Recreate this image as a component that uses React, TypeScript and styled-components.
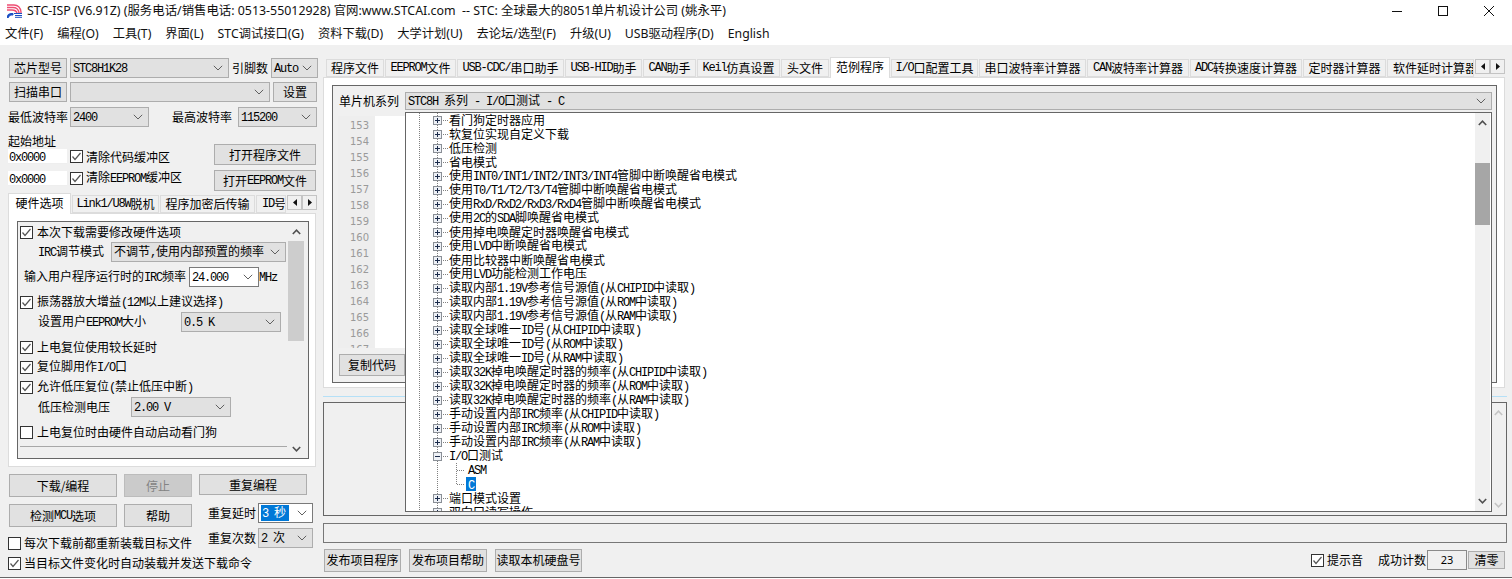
import React from "react";
import styled, { createGlobalStyle } from "styled-components";

const Global = createGlobalStyle`
  html, body { margin: 0; padding: 0; background: #fff; }
  * { box-sizing: border-box; }
`;

const CJK = `"Noto Sans CJK SC", "Noto Sans", sans-serif`;

const Page = styled.div`
  width: 1512px; height: 579px; overflow: hidden; display: flex; flex-direction: column;
  background: #fff; color: #000; font: 12px/14px ${CJK};
`;
const TitleBar = styled.header`
  height: 22px; display: flex; align-items: center; padding-left: 7px; background: #fff;
`;
const TitleText = styled.span`
  margin-left: 5px; flex: 1; white-space: pre; font: 12.4px/16px "Noto Sans", "Noto Sans CJK SC", sans-serif; color: #111;
`;
const WinButton = styled.span`
  width: 46px; height: 22px; display: flex; align-items: center; justify-content: center;
`;
const MenuBar = styled.nav`
  height: 23px; display: flex; align-items: center; gap: 14px; padding-left: 5px; background: #fff;
`;
const MenuItem = styled.span`
  font: 12.25px/16px "Noto Sans", "Noto Sans CJK SC", sans-serif; white-space: nowrap; color: #111;
`;
const Main = styled.main`
  height: 533px; display: flex; background: #f0f0f0; border-bottom: 1px solid #666;
`;
const LeftCol = styled.section`
  width: 323px; flex: none; padding: 13px 0 0 8px;
`;
const RightCol = styled.section`
  width: 1184px; flex: none; padding-top: 12px;
`;
const LatinRun = styled.span`
  font-family: "Liberation Mono", monospace; font-size: 12px; letter-spacing: -1.2px;
`;
const T = ({ children }: { children: string }) => (
  <>
    {children.split(/([\x20-\x7e]+)/).map((s, i) => (i % 2 ? <LatinRun key={i}>{s}</LatinRun> : s))}
  </>
);

const Row = styled.div<{ $top?: number; $pl?: number; $gap?: number; $start?: boolean }>`
  display: flex; align-items: ${p => (p.$start ? "flex-start" : "center")}; margin-top: ${p => p.$top ?? 0}px;
  padding-left: ${p => p.$pl ?? 0}px; gap: ${p => p.$gap ?? 3}px;
`;
const Btn = styled.div<{ $w: number; $h?: number; $off?: boolean }>`
  width: ${p => p.$w}px; height: ${p => p.$h ?? 20}px; flex: none;
  display: flex; align-items: center; justify-content: center; white-space: nowrap;
  background: ${p => (p.$off ? "#cbcbcb" : "#e1e1e1")};
  border: 1px solid ${p => (p.$off ? "#bcbcbc" : "#adadad")};
  color: ${p => (p.$off ? "#838383" : "#000")};
`;
const Label = styled.span<{ $w?: number; $ml?: number }>`
  ${p => (p.$w ? `width: ${p.$w}px;` : "")} flex: none; white-space: nowrap; margin-left: ${p => p.$ml ?? 0}px;
`;
const SelectBox = styled.div<{ $w: number; $h?: number; $white?: boolean }>`
  width: ${p => p.$w}px; height: ${p => p.$h ?? 20}px; flex: none; display: flex; align-items: center;
  justify-content: space-between; padding: 0 5px 0 2px; white-space: nowrap;
  background: ${p => (p.$white ? "#fff" : "#e1e1e1")};
  border: 1px solid ${p => (p.$white ? "#7a7a7a" : "#adadad")};
`;
const Chevron = () => (
  <svg width="10" height="6" viewBox="0 0 10 6" style={{ flex: "none" }}>
    <path d="M.8.8 5 5 9.2.8" fill="none" stroke="#606060" strokeWidth="1" />
  </svg>
);
const Select = ({ w, h, white, v }: { w: number; h?: number; white?: boolean; v: string }) => (
  <SelectBox $w={w} $h={h} $white={white}>
    <span><T>{v}</T></span>
    <Chevron />
  </SelectBox>
);
const Highlight = styled.span`
  background: #0078d7; color: #fff; padding: 0 3px 0 1px; margin-left: 0;
`;
const BoxSvg = styled.svg`
  flex: none; display: block;
`;
const Check = ({ on }: { on?: boolean }) => (
  <BoxSvg width="13" height="13" viewBox="0 0 13 13">
    <rect x=".5" y=".5" width="12" height="12" fill="#fff" stroke="#333" />
    {on && <path d="M2.5 6.5 5 9.5l5.5-6.5" fill="none" stroke="#555" strokeWidth="1.2" />}
  </BoxSvg>
);
const AddressBlock = styled.div`
  display: flex; margin-top: 7px;
`;
const AddressLeft = styled.div`
  width: 206px; flex: none;
`;
const AddressButtons = styled.div`
  display: flex; flex-direction: column; gap: 5px; padding-top: 10px;
`;
const AddressInput = styled.div`
  width: 59px; height: 15px; flex: none; background: #fff; padding-left: 1px; line-height: 13px; border-bottom: 1px solid #eee;
`;
const TabStrip = styled.div<{ $top?: number; $pl?: number }>`
  height: 20px; display: flex; align-items: flex-end; gap: 1px; margin-top: ${p => p.$top ?? 0}px; padding-left: ${p => p.$pl ?? 0}px;
`;
const Tab = styled.div<{ $w: number; $on?: boolean }>`
  width: ${p => p.$w}px; flex: none; overflow: hidden; white-space: nowrap; display: flex; align-items: center; justify-content: center;
  height: ${p => (p.$on ? 21 : 18)}px;
  padding-bottom: ${p => (p.$on ? 3 : 0)}px;
  background: ${p => (p.$on ? "#fff" : "#f0f0f0")};
  border: 1px solid #dcdcdc; border-bottom: ${p => (p.$on ? "none" : "1px solid #dcdcdc")};
  position: relative; z-index: ${p => (p.$on ? 2 : 0)}; margin-bottom: ${p => (p.$on ? -1 : 0)}px;
`;
const TabClip = styled(Tab)`
  justify-content: flex-start; padding-left: 5px;
`;
const TabArrows = styled.div`
  display: flex; align-self: flex-start; margin-top: 2px; flex: none;
`;
const TabArrow = styled.div`
  width: 15px; height: 15px; background: #f0f0f0; border: 1px solid #c4c4c4; display: flex; align-items: center; justify-content: center;
`;
const Arrows = () => (
  <TabArrows>
    <TabArrow><svg width="4" height="7"><path d="M4 0v7L0 3.5z" fill="#111" /></svg></TabArrow>
    <TabArrow><svg width="4" height="7"><path d="M0 0v7l4-3.5z" fill="#111" /></svg></TabArrow>
  </TabArrows>
);
const OptionsPanel = styled.div`
  width: 308px; height: 254px; background: #fff; border: 1px solid #dcdcdc; padding: 7px 0 0 8px;
`;
const OptionsInner = styled.div`
  width: 292px; height: 238px; display: flex; border: 1px solid #666; background: #f0f0f0;
`;
const OptionsBody = styled.div`
  width: 270px; flex: none; padding-left: 2px;
`;
const OptRow = styled.div<{ $h?: number; $top?: number; $pl?: number }>`
  height: ${p => p.$h ?? 20}px; margin-top: ${p => p.$top ?? 0}px; padding-left: ${p => p.$pl ?? 0}px;
  display: flex; align-items: center; white-space: nowrap;
`;
const OptCheckText = styled.span`
  margin-left: 4px;
`;
const OptRule = styled.div`
  height: 1px; width: 267px; margin-top: 4px; background: #a8a8a8;
`;
const Scroll = styled.div<{ $w?: number; $mr?: number }>`
  width: ${p => p.$w ?? 16}px; flex: none; display: flex; flex-direction: column; align-items: stretch; background: #f0f0f0;
  margin-right: ${p => p.$mr ?? 0}px;
`;
const ScrollEnd = styled.div<{ $h: number }>`
  height: ${p => p.$h}px; flex: none; display: flex; align-items: center; justify-content: center;
`;
const Thumb = styled.div<{ $h: number; $c: string }>`
  height: ${p => p.$h}px; flex: none; background: ${p => p.$c};
`;
const ScrollFill = styled.div`
  flex: 1;
`;
const ScrollGap = styled.div<{ $h: number }>`
  height: ${p => p.$h}px; flex: none;
`;
const Caret = ({ down, c = "#505050" }: { down?: boolean; c?: string }) => (
  <svg width="9" height="6" viewBox="0 0 9 6" style={{ display: "block", flex: "none" }}>
    <polyline points={down ? "0.8,1 4.5,4.8 8.2,1" : "0.8,5 4.5,1.2 8.2,5"} fill="none" stroke={c} strokeWidth="1.6" />
  </svg>
);
const BottomSplit = styled.div`
  display: flex; margin-top: 6px;
`;
const BottomLeft = styled.div`
  width: 200px; flex: none;
`;
const BottomRight = styled.div`
  display: flex; flex-direction: column; gap: 5px;
`;
const PanelMain = styled.div`
  width: 1182px; height: 311px; background: #fff; border: 1px solid #dcdcdc; padding: 7px 0 0 8px;
`;
const GroupBox = styled.div`
  position: relative; width: 1165px; height: 298px; background: #f0f0f0; border: 1px solid #666; padding: 6px 0 0 6px;
`;
const SeriesLabel = styled.span`
  width: 66px; flex: none;
`;
const CodeArea = styled.div`
  display: flex; width: 1150px; height: 232px; margin-top: 6px; margin-left: -1px; background: #fff; overflow: hidden;
`;
const Gutter = styled.div`
  width: 37px; flex: none; background: #eee; padding: 2px 6px 0 0; text-align: right;
  font: 10px/16px "DejaVu Sans", sans-serif; color: #9a9a9a;
`;
const CopyRow = styled.div`
  margin-top: 6px;
`;
const TreeDrop = styled.div`
  position: absolute; left: 72px; top: 26px; width: 1087px; height: 400px; z-index: 10;
  display: flex; background: #fff; border: 1px solid #666;
`;
const TreeList = styled.div`
  flex: 1; overflow: hidden; min-width: 0;
`;
const TreeRow = styled.div`
  height: 14px; display: flex; align-items: center; white-space: nowrap; line-height: 14px;
`;
const TreeSvg = styled.svg`
  flex: none; display: block;
`;
const TreeSelected = styled.span`
  background: #0078d7; color: #fff; width: 10px; height: 14px; text-align: center; margin-left: -2px; line-height: 14px; overflow: hidden;
`;
const Splitter = styled.div`
  height: 1px; margin-top: 8px; background: #b5e0f7;
`;
const LogPanel = styled.div`
  height: 114px; margin-top: 5px; display: flex; justify-content: flex-end; border: 1px solid #666; background: #f0f0f0;
`;
const StatusBox = styled.div`
  height: 20px; margin-top: 7px; border: 1px solid #777; background: #f0f0f0;
`;
const BottomBar = styled.div`
  display: flex; align-items: center; height: 24px; margin-top: 5px; padding-left: 1px; padding-right: 2px;
`;
const Spacer = styled.div`
  flex: 1;
`;
const CountBox = styled.div`
  width: 40px; height: 20px; flex: none; display: flex; align-items: center; justify-content: center;
  background: #f0f0f0; border: 1px solid #8a8a8a; margin: 0 1px; font-family: "Noto Sans", sans-serif; font-size: 11px;
`;

const Dots = ({ x1, y1, x2, y2 }: { x1: number; y1: number; x2: number; y2: number }) => (
  <line x1={x1} y1={y1} x2={x2} y2={y2} stroke="#808080" strokeWidth="1" strokeDasharray="1 1" />
);
const TreeGlyph = ({ kind }: { kind: "plus" | "minus" | "leaf" | "lastleaf" }) => {
  const leaf = kind === "leaf" || kind === "lastleaf";
  return (
    <TreeSvg width={leaf ? 62 : 43} height="14" viewBox={`0 0 ${leaf ? 62 : 43} 14`}>
      <Dots x1={13.5} y1={0} x2={13.5} y2={14} />
      <Dots x1={31.5} y1={0} x2={31.5} y2={14} />
      {leaf ? (
        <>
          <Dots x1={50.5} y1={0} x2={50.5} y2={kind === "leaf" ? 14 : 7} />
          <Dots x1={51} y1={7.5} x2={59} y2={7.5} />
        </>
      ) : (
        <>
          <Dots x1={37} y1={7.5} x2={42} y2={7.5} />
          <rect x="27.5" y="3.5" width="8" height="8" fill="#eef1f6" stroke="#8a8f96" />
          <line x1="29" y1="7.5" x2="34" y2="7.5" stroke="#1a2a4a" />
          {kind === "plus" && <line x1="31.5" y1="5" x2="31.5" y2="10" stroke="#1a2a4a" />}
        </>
      )}
    </TreeSvg>
  );
};

const rightTabs: [string, number, boolean?][] = [
  ["程序文件", 58], ["EEPROM文件", 71], ["USB-CDC/串口助手", 107], ["USB-HID助手", 77], ["CAN助手", 53],
  ["Keil仿真设置", 83], ["头文件", 48], ["范例程序", 60, true], ["I/O口配置工具", 87], ["串口波特率计算器", 107],
  ["CAN波特率计算器", 102], ["ADC转换速度计算器", 112], ["定时器计算器", 83],
];
const treeItems = [
  "看门狗定时器应用", "软复位实现自定义下载", "低压检测", "省电模式",
  "使用INT0/INT1/INT2/INT3/INT4管脚中断唤醒省电模式", "使用T0/T1/T2/T3/T4管脚中断唤醒省电模式",
  "使用RxD/RxD2/RxD3/RxD4管脚中断唤醒省电模式", "使用2C的SDA脚唤醒省电模式", "使用掉电唤醒定时器唤醒省电模式",
  "使用LVD中断唤醒省电模式", "使用比较器中断唤醒省电模式", "使用LVD功能检测工作电压",
  "读取内部1.19V参考信号源值(从CHIPID中读取)", "读取内部1.19V参考信号源值(从ROM中读取)", "读取内部1.19V参考信号源值(从RAM中读取)",
  "读取全球唯一ID号(从CHIPID中读取)", "读取全球唯一ID号(从ROM中读取)", "读取全球唯一ID号(从RAM中读取)",
  "读取32K掉电唤醒定时器的频率(从CHIPID中读取)", "读取32K掉电唤醒定时器的频率(从ROM中读取)", "读取32K掉电唤醒定时器的频率(从RAM中读取)",
  "手动设置内部IRC频率(从CHIPID中读取)", "手动设置内部IRC频率(从ROM中读取)", "手动设置内部IRC频率(从RAM中读取)",
];
const menus = ["文件(F)", "编程(O)", "工具(T)", "界面(L)", "STC调试接口(G)", "资料下载(D)", "大学计划(U)", "去论坛/选型(F)", "升级(U)", "USB驱动程序(D)", "English"];
const lineNos = Array.from({ length: 15 }, (_, i) => 153 + i);

const Opt = ({ on, text, top }: { on: boolean; text: string; top?: number }) => (
  <OptRow $top={top}>
    <Check on={on} />
    <OptCheckText><T>{text}</T></OptCheckText>
  </OptRow>
);

export default function App() {
  return (
    <Page>
      <Global />
      <TitleBar>
        <svg width="15" height="14" viewBox="0 0 15 14" style={{ flex: "none" }}>
          <path d="M0 1h7q6 0 7 7v1M0 3.500h6q5 0 6 5v1M0 6h5q4 0 5 3v1" fill="none" stroke="#ee4d73" strokeWidth="1.4" />
          <path d="M0 13.500q.5-4 4-4h2v1.500H4q-2 0-2.500 2.500zM7 9.500h8M8 11.500h7M8 13.300h7" fill="#1a4fc4" stroke="#1a4fc4" strokeWidth="1" />
        </svg>
        <TitleText>STC-ISP (V6.91Z) (服务电话/销售电话: 0513-55012928) 官网:www.STCAI.com  -- STC: 全球最大的8051单片机设计公司 (姚永平)</TitleText>
        <WinButton><svg width="10" height="10"><line x1="0" y1="5.5" x2="10" y2="5.5" stroke="#111" /></svg></WinButton>
        <WinButton><svg width="10" height="10"><rect x=".5" y=".5" width="9" height="9" fill="none" stroke="#111" /></svg></WinButton>
        <WinButton><svg width="10" height="10"><path d="M0 0l10 10M10 0 0 10" stroke="#111" fill="none" /></svg></WinButton>
      </TitleBar>
      <MenuBar>
        {menus.map(m => <MenuItem key={m}>{m}</MenuItem>)}
      </MenuBar>
      <Main>
        <LeftCol>
          <Row $pl={1}>
            <Btn $w={58}>芯片型号</Btn>
            <Select w={159} v="STC8H1K28" />
            <Label $w={36}>引脚数</Label>
            <Select w={47} v="Auto" />
          </Row>
          <Row $pl={1} $top={4}>
            <Btn $w={58}>扫描串口</Btn>
            <Select w={200} v="" />
            <Btn $w={44}>设置</Btn>
          </Row>
          <Row $top={5}>
            <Label $w={59}>最低波特率</Label>
            <Select w={79} v="2400" />
            <Label $w={63} $ml={20}>最高波特率</Label>
            <Select w={79} v="115200" />
          </Row>
          <AddressBlock>
            <AddressLeft>
              <Label>起始地址</Label>
              <Row $gap={3} $top={1}>
                <AddressInput><T>0x0000</T></AddressInput>
                <Check on />
                <span>清除代码缓冲区</span>
              </Row>
              <Row $gap={3} $top={6}>
                <AddressInput><T>0x0000</T></AddressInput>
                <Check on />
                <span><T>清除EEPROM缓冲区</T></span>
              </Row>
            </AddressLeft>
            <AddressButtons>
              <Btn $w={102} $h={21}>打开程序文件</Btn>
              <Btn $w={102} $h={21}><T>打开EEPROM文件</T></Btn>
            </AddressButtons>
          </AddressBlock>
          <TabStrip $top={2}>
            <Tab $w={63} $on>硬件选项</Tab>
            <Tab $w={87}><T>Link1/U8W脱机</T></Tab>
            <Tab $w={95}>程序加密后传输</Tab>
            <TabClip $w={30}><T>ID号</T></TabClip>
            <Arrows />
          </TabStrip>
          <OptionsPanel>
            <OptionsInner>
              <OptionsBody>
                <Opt on text="本次下载需要修改硬件选项" />
                <OptRow $pl={18} $h={20}>
                  <Label $w={73}><T>IRC调节模式</T></Label>
                  <Select w={175} v="不调节,使用内部预置的频率" />
                </OptRow>
                <OptRow $pl={4} $top={5}>
                  <Label $w={165}><T>输入用户程序运行时的IRC频率</T></Label>
                  <Select w={70} white v="24.000" />
                  <Label $ml={0}><T>MHz</T></Label>
                </OptRow>
                <Opt on top={5} text="振荡器放大增益(12M以上建议选择)" />
                <OptRow $pl={18}>
                  <Label $w={143}><T>设置用户EEPROM大小</T></Label>
                  <Select w={100} v="0.5 K" />
                </OptRow>
                <Opt on top={5} text="上电复位使用较长延时" />
                <Opt on text="复位脚用作I/O口" />
                <Opt on text="允许低压复位(禁止低压中断)" />
                <OptRow $pl={18}>
                  <Label $w={93}>低压检测电压</Label>
                  <Select w={100} v="2.00 V" />
                </OptRow>
                <Opt on={false} top={5} text="上电复位时由硬件自动启动看门狗" />
                <OptRule />
              </OptionsBody>
              <Scroll $mr={3}>
                <ScrollEnd $h={19}><Caret /></ScrollEnd>
                <Thumb $h={100} $c="#cdcdcd" />
                <ScrollFill />
                <ScrollEnd $h={19}><Caret down /></ScrollEnd>
              </Scroll>
            </OptionsInner>
          </OptionsPanel>
          <Row $pl={1} $top={7} $gap={7} $start>
            <Btn $w={108} $h={23}>下载/编程</Btn>
            <Btn $w={68} $h={23} $off>停止</Btn>
            <Btn $w={108} $h={21}>重复编程</Btn>
          </Row>
          <BottomSplit>
            <BottomLeft>
              <Row $pl={1} $top={1} $gap={7}>
                <Btn $w={108} $h={23}><T>检测MCU选项</T></Btn>
                <Btn $w={68} $h={23}>帮助</Btn>
              </Row>
              <Row $top={9} $gap={3}>
                <Check />
                <span>每次下载前都重新装载目标文件</span>
              </Row>
            </BottomLeft>
            <BottomRight>
              <Row>
                <Label $w={47}>重复延时</Label>
                <SelectBox $w={55} $white>
                  <Highlight><LatinRun>3 </LatinRun>秒</Highlight>
                  <Chevron />
                </SelectBox>
              </Row>
              <Row>
                <Label $w={47}>重复次数</Label>
                <Select w={55} v="2 次" />
              </Row>
            </BottomRight>
          </BottomSplit>
          <Row $top={6} $gap={3}>
            <Check on />
            <span>当目标文件变化时自动装载并发送下载命令</span>
          </Row>
        </LeftCol>
        <RightCol>
          <TabStrip $pl={3}>
            {rightTabs.map(([t, w, on]) => <Tab key={t} $w={w} $on={on}><T>{t}</T></Tab>)}
            <TabClip $w={87}>软件延时计算器</TabClip>
            <Arrows />
          </TabStrip>
          <PanelMain>
            <GroupBox>
              <Row $gap={0}>
                <SeriesLabel>单片机系列</SeriesLabel>
                <Select w={1087} h={18} v="STC8H 系列 - I/O口测试 - C" />
              </Row>
              <CodeArea>
                <Gutter>{lineNos.map(n => <div key={n}>{n}</div>)}</Gutter>
              </CodeArea>
              <CopyRow><Btn $w={66} $h={22}>复制代码</Btn></CopyRow>
              <TreeDrop>
                <TreeList>
                  {treeItems.map(t => (
                    <TreeRow key={t}><TreeGlyph kind="plus" /><span><T>{t}</T></span></TreeRow>
                  ))}
                  <TreeRow><TreeGlyph kind="minus" /><span><T>I/O口测试</T></span></TreeRow>
                  <TreeRow><TreeGlyph kind="leaf" /><span><T>ASM</T></span></TreeRow>
                  <TreeRow><TreeGlyph kind="lastleaf" /><TreeSelected><T>C</T></TreeSelected></TreeRow>
                  <TreeRow><TreeGlyph kind="plus" /><span>端口模式设置</span></TreeRow>
                  <TreeRow><TreeGlyph kind="plus" /><span>双向口读写操作</span></TreeRow>
                </TreeList>
                <Scroll $w={15} $mr={1}>
                  <ScrollEnd $h={20}><Caret /></ScrollEnd>
                  <ScrollGap $h={30} />
                  <Thumb $h={62} $c="#a6a6a6" />
                  <ScrollFill />
                  <ScrollEnd $h={20}><Caret down /></ScrollEnd>
                </Scroll>
              </TreeDrop>
            </GroupBox>
          </PanelMain>
          <Splitter />
          <LogPanel>
            <Scroll $w={16}>
              <ScrollEnd $h={20}><Caret c="#c4c4c4" /></ScrollEnd>
              <ScrollFill />
              <ScrollEnd $h={20}><Caret down c="#c4c4c4" /></ScrollEnd>
            </Scroll>
          </LogPanel>
          <StatusBox />
          <BottomBar>
            <Row $gap={8}>
              <Btn $w={77} $h={23}>发布项目程序</Btn>
              <Btn $w={78} $h={23}>发布项目帮助</Btn>
              <Btn $w={87} $h={23}>读取本机硬盘号</Btn>
            </Row>
            <Spacer />
            <Check on />
            <Label $ml={3}>提示音</Label>
            <Label $ml={15}>成功计数</Label>
            <CountBox>23</CountBox>
            <Btn $w={37} $h={18}>清零</Btn>
          </BottomBar>
        </RightCol>
      </Main>
    </Page>
  );
}
